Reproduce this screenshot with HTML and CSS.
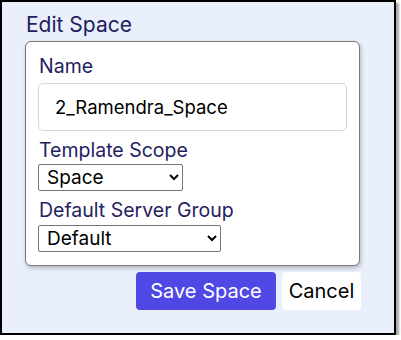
FILE: index.html
```html
<!DOCTYPE html>
<html lang="en">
<head>
    <meta charset="UTF-8">
    <title>Edit Space</title>
    <link rel="stylesheet" href="styles.css">
</head>
<body>
    <div class="frame">
        <h2 class="title">Edit Space</h2>

        <!-- form card -->
        <div class="card">
            <label class="lbl" for="spaceName">Name</label>
            <input class="txt" id="spaceName" type="text" value="2_Ramendra_Space">

            <label class="lbl lbl-gap" for="scope">Template Scope</label>
            <select class="sel sel-scope" id="scope">
                <option>Space</option>
                <option>Global</option>
            </select>

            <label class="lbl lbl-gap" for="group">Default Server Group</label>
            <select class="sel sel-group" id="group">
                <option>Default</option>
            </select>
        </div>

        <div class="btns">
            <button class="btn btn-save">Save Space</button>
            <button class="btn btn-cancel">Cancel</button>
        </div>
    </div>
</body>
</html>
```

FILE: styles.css
```css
body{
    margin:0;
    font-family: Inter, "Noto Sans", sans-serif;
    background-color: white;
}
.frame{
    width:369px;
    height:331px;
    border:2px solid black;
    background-color: #e9effb;
    box-shadow: 3px 3px 2px #a8a8a8;
    padding:0 0 0 23px;
}
.title{
    margin:0;
    padding-top:10px;
    padding-left:1px;
    font-size:21px;
    font-weight:400;
    color:#1f2160;
    line-height:26px;
}
.card{
    margin-top:3px;
    width:309px;
    background-color:white;
    border:1px solid #7a7a7a;
    border-radius:6px;
    box-shadow: 1px 2px 4px rgba(0,0,0,0.25);
    padding:12px 12px 13px 12px;
    display:flex;
    flex-direction:column;
    align-items:flex-start;
}
.lbl{
    font-size:19.5px;
    color:#1f2160;
    line-height:24px;
    padding-left:1px;
}
.lbl-gap{
    margin-top:7px;
}
.txt{
    margin-top:5px;
    width:309px;
    height:48px;
    box-sizing:border-box;
    border:1px solid #d4d6db;
    border-radius:5px;
    padding:0 16px;
    font-family: Inter, "Noto Sans", sans-serif;
    font-size:18.5px;
    color:black;
}
.sel{
    height:27px;
    border:1px solid #767676;
    border-radius:2px;
    background-color:white;
    font-family: Inter, "Noto Sans", sans-serif;
    font-size:19px;
    color:black;
    padding-left:4px;
}
.sel-scope{
    margin-top:2px;
    width:145px;
}
.sel-group{
    margin-top:3px;
    width:183px;
}
.btns{
    width:336px;
    margin-top:6px;
    display:flex;
    justify-content:flex-end;
    gap:6px;
}
.btn{
    height:38px;
    border:none;
    border-radius:4px;
    font-family: Inter, "Noto Sans", sans-serif;
    font-size:20px;
    padding:0;
}
.btn-save{
    background-color:#5048e5;
    color:white;
    width:140px;
}
.btn-cancel{
    background-color:white;
    color:black;
    width:79px;
}
```
